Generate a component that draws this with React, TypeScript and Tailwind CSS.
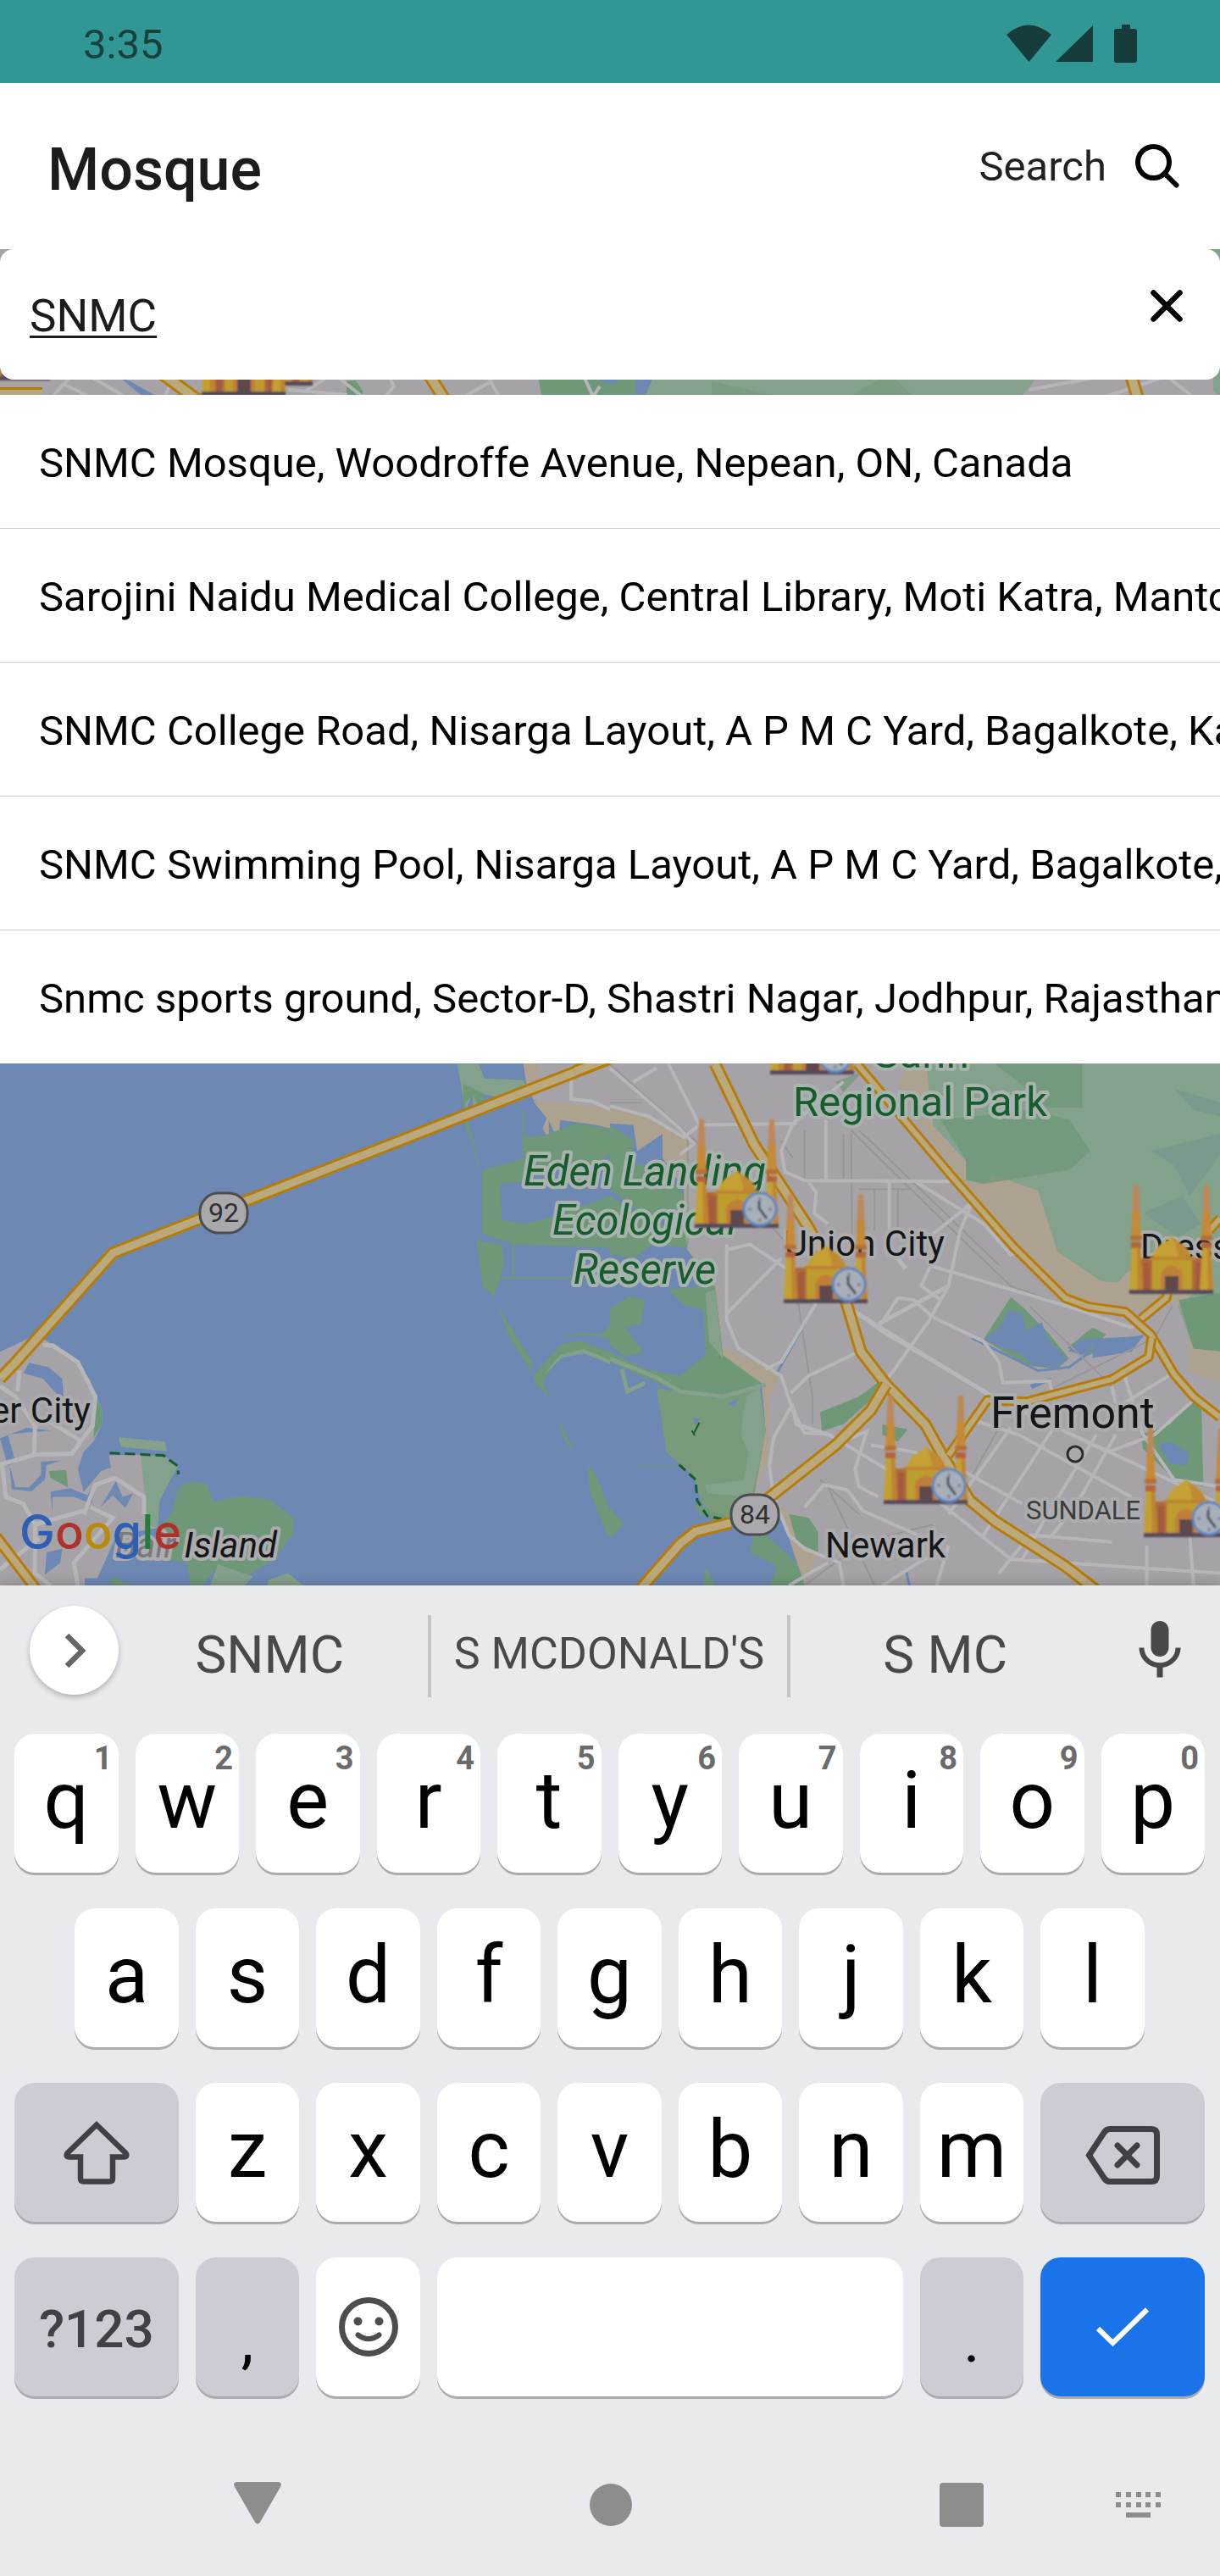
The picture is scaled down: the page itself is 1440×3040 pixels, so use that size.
import { useState } from "react";
import type { ReactNode } from "react";

const SUGGESTIONS = [
  "SNMC Mosque, Woodroffe Avenue, Nepean, ON, Canada",
  "Sarojini Naidu Medical College, Central Library, Moti Katra, Mantola, Agra",
  "SNMC College Road, Nisarga Layout, A P M C Yard, Bagalkote, Karnataka",
  "SNMC Swimming Pool, Nisarga Layout, A P M C Yard, Bagalkote, Karnataka",
  "Snmc sports ground, Sector-D, Shastri Nagar, Jodhpur, Rajasthan, India",
];

const WATER = "#6c88b3";
const LAND = "#a5a3a7";
const MARSH = "#6f9878";
const PARK = "#84a18b";
const SAND = "#ada28f";
const STREET = "#b6b6b9";
const RAIL = "#979599";
const CASING = "#b67c0a";
const HIGHWAY = "#b9a97d";

type MarkerProps = { x: number; y: number; clock?: boolean };

function MosqueMarker({ x, y, clock = false }: MarkerProps) {
  return (
    <g transform={`translate(${x} ${y})`} filter="url(#soft)">
      <rect x="13" y="87" width="15" height="38" fill="#b06a38" />
      <rect x="17" y="92" width="7" height="32" fill="#a35a3e" />
      <rect x="74" y="87" width="15" height="38" fill="#b06a38" />
      <rect x="78" y="92" width="7" height="32" fill="#a35a3e" />
      <path d="M27 88C28 78 35 70 44 66Q49 63 50 60Q51 63 57 67C66 72 72 78 73 88Z" fill="#c4a034" />
      <path d="M50 62Q55 67 58 88H73C72 78 66 72 57 67Z" fill="#c08a30" />
      <rect x="27" y="87" width="47" height="38" fill="#bd9c2f" />
      <rect x="24" y="85" width="53" height="4" fill="#bd8230" />
      <path d="M37 125V108Q38 98 50 95Q62 98 63 108V125Z" fill="#c07f38" />
      <rect x="42" y="108" width="16" height="18" fill="#5f4a4e" />
      {[8, 91].map((cx) => (
        <g key={cx} transform={`translate(${cx} 0)`}>
          <path d="M-3 2Q0-2 3 2L5 42H-5Z" fill="#bd8858" />
          <path d="M-4 32H4L6 66H-6Z" fill="#c48a34" />
          <rect x="-7" y="60" width="14" height="6" rx="2" fill="#b66e35" />
          <rect x="-6" y="68" width="12" height="7" fill="#b4643a" />
          <path d="M-5 75H5L8 125H-8Z" fill="#c2a030" />
          <path d="M1 75H5L8 125H2Z" fill="#bf8333" />
        </g>
      ))}
      <rect x="0" y="124" width="99" height="5" fill="#57495a" />
      {clock && (
        <g>
          <circle cx="77" cy="107" r="19" fill="#a9afb9" stroke="#5b86bd" strokeWidth="3" />
          <path d="M77 93v4M77 118v4M63 107h4M87 107h4" stroke="#7b8491" strokeWidth="3" />
          <path d="M76 97V106L85 118" fill="none" stroke="#4a5364" strokeWidth="3" />
        </g>
      )}
    </g>
  );
}

function Highway({ d, wide = 15 }: { d: string; wide?: number }) {
  return (
    <g fill="none" strokeLinejoin="round">
      <path d={d} stroke={CASING} strokeWidth={wide} vectorEffect="non-scaling-stroke" />
      <path d={d} stroke={HIGHWAY} strokeWidth={wide - 6} vectorEffect="non-scaling-stroke" />
    </g>
  );
}

function Streets({ d, width = 4, color = STREET }: { d: string; width?: number; color?: string }) {
  return <path d={d} fill="none" stroke={color} strokeWidth={width} vectorEffect="non-scaling-stroke" />;
}

function Shield({ x, y, label }: { x: number; y: number; label: string }) {
  return (
    <g>
      <rect x={x - 28} y={y - 23} width="56" height="47" rx="22" fill="#a9a9ab" stroke="#4b4c4e" strokeWidth="3" />
      <text x={x} y={y + 11} fontSize="32" textAnchor="middle" fill="#2f3032">
        {label}
      </text>
    </g>
  );
}

function WestBay() {
  return (
    <g transform="translate(0 1240) scale(.4592 .4082)">
      {/* Foster City and Bair Island */}
      <path d="M0 870L20 860L95 820L135 850L190 890L230 950L262 1040L262 1080L240 1130L215 1160L200 1210L215 1275L260 1215L285 1205L280 1170L360 1168L425 1175L458 1200L410 1290L405 1380L300 1400L250 1525L218 1525L218 1546H0Z" fill={LAND} />
      <path d="M230 960L262 1040L262 1080L240 1120L246 1020Z" fill={MARSH} />
      <path d="M75 902L125 915L160 948L164 1010L140 985L110 948L60 932Z" fill={WATER} />
      <path d="M0 1120L70 1090L130 1098L60 1104L20 1110L40 1190L20 1200Z" fill={WATER} />
      <path d="M105 1188L155 1185L120 1198L115 1240L80 1274L30 1268L25 1200L40 1262L75 1262L106 1225Z" fill={WATER} />
      <path d="M130 1275L180 1265L225 1285L250 1240L235 1310L190 1290L135 1290V1340Z" fill={WATER} />
      <path d="M125 1215L170 1212L175 1262L130 1235Z" fill={MARSH} />
      <path d="M258 1320L298 1245L315 1290L342 1280L322 1322L290 1285Z" fill={WATER} />
      <path d="M120 1450L160 1440L155 1480L115 1515Z" fill={WATER} />
      <path d="M305 1118L425 1130L428 1158L310 1145Z" fill={PARK} />
      <path d="M362 1170L420 1172L458 1200L410 1300L405 1380L380 1370Z" fill={PARK} />
      <path d="M440 1340L460 1260L490 1245L530 1252L550 1305L610 1288L690 1295L755 1350L752 1400L705 1470L640 1515L560 1490L520 1546H490L480 1480L420 1470L405 1380Z" fill={MARSH} />
      <path d="M560 1485L650 1520L630 1546H540ZM690 1530L740 1510L780 1546H688Z" fill={PARK} />
      <path d="M285 1520L340 1546H288Z" fill={MARSH} />
      <Streets d="M110 850L135 852L200 900L245 1000L238 1085L208 1128L185 1165L90 1168L5 1195L15 1290L60 1310L90 1370V1510L130 1546M0 970L40 1000L90 1085L88 1165M50 925L45 985M110 1060L208 1128M215 1340L245 1255L295 1235L370 1290V1340M232 1320L290 1350L190 1480L200 1546M90 1370L215 1330M0 1500L100 1410" width={5} />
      <path d="M282 1163L420 1170L458 1202V1225" fill="none" stroke="#165c2f" strokeWidth="3" strokeDasharray="12 6" vectorEffect="non-scaling-stroke" />

      {/* Eden Landing shore */}
      <path d="M1345 38H1568V225L1500 205L1440 195L1370 140Z" fill={LAND} />
      <path d="M1345 38H1385L1380 120L1355 110Z" fill={SAND} />
      <path d="M1370 145L1420 150L1568 165V220L1440 200L1435 262L1410 200L1412 262L1395 225L1405 195Z" fill={SAND} />
      <path d="M1175 38H1230L1245 80L1345 85L1360 120L1300 140L1240 125L1238 170L1215 170L1215 120L1195 180L1185 100Z" fill={PARK} />
      <path d="M1190 95L1245 125L1240 175L1215 130L1195 150L1210 260L1190 200Z" fill={MARSH} />
      <path d="M1240 345L1350 310L1345 250L1400 245L1480 210L1568 225V300L1500 350L1400 330L1345 380L1285 385L1290 490L1350 500L1420 480L1568 420V570L1320 560L1240 530Z" fill={MARSH} />
      <path d="M1225 548L1290 560L1295 620L1270 710L1240 680Z" fill={MARSH} />
      <Streets d="M1468 60V140L1520 145L1568 170" />
      <Streets d="M1195 180L1230 330M1345 180V310M1280 658H1568M1320 560V655M1285 750L1365 915" width={2} color={MARSH} />
      <path d="M1285 755L1320 810L1368 900V930L1310 830ZM1435 1065L1470 1145L1465 1150L1445 1110ZM1510 1200L1530 1220L1575 1350L1620 1460L1560 1400L1515 1270Z" fill={MARSH} />
      <path d="M1370 940L1440 850L1490 838L1568 870V895L1500 870L1440 880L1395 960L1415 1005L1375 960Z" fill={MARSH} />
      <path d="M1395 940L1440 880L1500 862L1568 895V905L1500 875L1445 888Z" fill={PARK} />
      <path d="M1430 830L1500 815L1568 822V830L1500 822ZM1545 825L1575 780V840Z" fill={MARSH} />

      <Highway d="M0 948L45 895L290 585L1568 22" wide={15} />
      <Highway d="M-10 1405L95 1560" wide={14} />
    </g>
  );
}

function EastBay() {
  return (
    <g transform="translate(720 1240) scale(.4592 .4082)">
      <path d="M0 0H1568V1546H0Z" fill={LAND} />
      {/* sand along the marsh and the foothills */}
      <path d="M0 165L110 190L200 260L195 560L275 680L290 860L440 930L410 1000L405 1180L370 1290L460 1330L500 1400L540 1440L500 1546H0Z" fill={SAND} />
      <path d="M760 38L820 55L830 215L915 330L985 360L1100 400L1150 580L1300 670L1420 600L1480 640L1568 720V960L1490 930L1480 760L1440 720L1370 750L1160 710L930 420L740 120Z" fill={SAND} />
      <path d="M800 38H1568V870L1500 860L1460 740L1500 700L1430 600L1330 640L1305 670L1260 665L1150 580L1100 405L985 358L960 385L915 375V320L830 215L815 60Z" fill={PARK} />
      <path d="M990 38H1213V165H1100L1060 100ZM850 200L1090 170L1180 200L1235 290L1180 345L960 385L915 370V315Z" fill={MARSH} opacity=".75" />
      <path d="M1450 110L1568 150V190L1500 170ZM1390 290L1568 240V300L1490 420L1450 330ZM1370 470L1470 420L1520 500L1460 540Z" fill="#7b998d" />
      <path d="M1462 720L1568 700V868L1500 862Z" fill={MARSH} />

      {/* salt ponds */}
      <path d="M0 210L60 215L70 290L135 240V310L190 400L190 560L270 690L290 880L390 965L400 1100L360 1290L440 1340L500 1546H0Z" fill={WATER} />
      <path d="M0 215L60 260L55 330L125 330L190 420L180 470L90 480L0 400Z" fill={MARSH} />
      <path d="M0 420L110 500L190 510L200 570L110 560L60 600L0 590Z" fill={MARSH} />
      <path d="M0 745L50 710L90 720L80 790L40 800L85 870L40 885L0 850ZM150 690L270 680L290 880L400 970L280 1000L170 985L0 900V870L90 920L180 940L245 880L240 750L190 735Z" fill={MARSH} />
      <path d="M245 700L270 690L290 890L255 840Z" fill={PARK} />
      <path d="M120 975L270 1005L385 975L400 1100L370 1290L430 1340L300 1350L240 1320L215 1230L145 1160Z" fill="#7a9a7c" />
      <path d="M350 1000L385 975L400 1100L365 1290L250 1280L245 1255L345 1240L355 1160L335 1110Z" fill={PARK} />
      <path d="M215 1310L310 1350L380 1380L480 1480L500 1546H410L430 1490L360 1450L370 1400L230 1340Z" fill={MARSH} />
      <path d="M0 1320L35 1370L0 1410ZM245 1490L270 1546H240Z" fill={MARSH} />
      <Streets d="M0 890L120 945L180 985L290 1000L400 965M30 920L45 985L90 960" width={5} color={PARK} />
      <Streets d="M75 1200H210M200 560V250" width={1} color={MARSH} />
      <path d="M302 1020L330 1005L318 1030ZM212 1060L230 1065L222 1085Z" fill={WATER} />
      <path d="M178 1197L220 1240L224 1300L250 1345L300 1357" fill="none" stroke="#165c2f" strokeWidth="3" strokeDasharray="10 6" vectorEffect="non-scaling-stroke" />
      <path d="M230 1075L216 1105M210 1098L218 1112" fill="none" stroke="#165c2f" strokeWidth="2" vectorEffect="non-scaling-stroke" />

      {/* city parks and lakes */}
      <path d="M540 1045L640 1000L700 950L690 990L600 1080L545 1100ZM700 1080L765 1095L740 1130L700 1110ZM460 1340L510 1350L535 1390V1450L480 1420ZM1365 1110L1440 1080L1495 1010L1520 1020L1525 1260L1450 1240L1370 1150Z" fill={MARSH} />
      <path d="M580 90L650 60L600 120Z" fill={MARSH} opacity=".7" />
      <path d="M960 835L1030 712L1065 745L1130 820L1180 890L1150 920L1070 910Z" fill={MARSH} />
      <path d="M962 835L1000 800L1025 750L1060 760L1070 810L1110 785L1125 830L1175 895L1145 915L1085 910L1060 880L1010 860Z" fill={WATER} />
      <path d="M1175 860L1240 800L1275 820L1250 850L1290 860L1230 880Z" fill={MARSH} />
      <path d="M1178 868L1210 835L1370 825L1340 870L1240 888L1245 848L1215 880ZM1080 965L1135 945L1130 955L1085 978ZM1410 1140L1440 1130L1490 1165L1480 1200L1440 1195Z" fill={WATER} />
      <Streets d="M930 830L1100 925L1180 915L1260 850L1370 825M430 930L500 790M770 1546L760 1500" width={3} color={WATER} />

      <Streets
        d="M0 40L220 260L480 590M620 230L900 540L1030 680L1180 740M500 230V380M600 240V370M640 230L1000 620M440 260L470 310M640 400H770M680 400V520M740 400V520M480 700L520 1000V1080M1080 740L1290 970M1130 980L1400 830L1445 740M540 1240L640 1340M500 1546L650 1420L830 1370M1000 1090L930 1230M560 1260L680 1546M0 150H80M620 240L622 560"
        width={2}
        color={RAIL}
      />
      <Streets
        d="M0 50L180 225L215 270L180 300M60 90L120 50M150 38L230 215L480 210M0 160L100 190L190 250L230 215M555 200V375M600 90L470 210L440 290L450 350L500 375L880 378M510 378L530 410L525 470L560 500M718 378V570M780 375L960 500L1030 590L1060 580M930 440L900 520L870 680L820 780L700 970M930 440L830 530M820 620L1180 740L1340 800L1370 770M860 530L800 680L850 720M300 560V780L330 860L440 940L470 1040L500 1105L560 1108L830 1290L1030 1470L1568 1510M300 760L440 600M300 575L360 560L440 620L640 760L980 1000L1568 1310M690 800L740 715L780 720L830 770L960 840L1000 900L1010 960L1130 955L1140 1010M545 700L440 900L400 920M640 870L510 940L465 990M470 1020L420 1120L410 1200L420 1290L460 1400L500 1440L590 1480L600 1546M500 1320L550 1255L610 1270L650 1330L790 1400M600 1130L660 1100L630 1210L640 1260L690 1290M670 1140L780 1160L900 1210L1060 1310M940 1070L1050 1110L1340 1290M1000 1010L1280 1160L1400 1110L1500 1010M870 1340L960 1200L1030 1090M960 1400L1140 1090M1060 1470L1120 1350L1250 1110M1000 1510L1080 1400L1290 1420M1130 1410L1200 1310L1300 1110M1380 1430V1546M1490 1400L1500 1546M1290 970L1300 1020M1320 930L1370 1110L1450 1240L1568 1260M460 1546L560 1480M1450 930L1320 1020M700 1546L850 1440M840 1546L870 1430"
      />
      <Streets d="M690 790L870 680M720 570L760 630M600 730L700 810L1000 1010M470 1030L480 1080L560 1110" width={5} />

      <Highway d="M-90 60L20 12" wide={15} />
      <Highway d="M270 38L370 270L510 510L600 700L645 870L710 965L810 1080L860 1180L925 1300L990 1360L1170 1490L1250 1560" wide={15} />
      <Highway d="M635 38L880 365L1040 570L1170 715L1230 740L1325 755L1390 820L1450 935L1500 1000L1568 1060" wide={12} />
      <Highway d="M710 965L670 1040L580 1140L400 1300M310 1365L220 1390L180 1425L75 1560" wide={15} />
      <Highway d="M870 1170L970 1010L1070 1015L1290 950L1385 885L1392 830M1365 775L1430 715L1435 690M1540 520L1568 485" wide={12} />
    </g>
  );
}

// Sliver of map between the search field and the result list.
function NorthBay() {
  return (
    <g>
      <rect x="0" y="294" width="1440" height="200" fill={LAND} />
      <path d="M634 440H770L760 480H642Z" fill={MARSH} />
      <path d="M765 440H1228L1196 480H755Z" fill={PARK} />
      <path d="M840 450L910 466H840ZM1050 440L1080 470H1000Z" fill="#7c9c82" />
      <path d="M700 446H735L722 454ZM750 446H771L762 466H750Z" fill={WATER} />
      <path d="M1425 294H1440V470L1432 460V400Z" fill={PARK} />
      <path d="M409 450L420 449L428 461V466H409Z" fill={MARSH} />
      <path d="M142 446L152 449L182 466H166Z" fill={WATER} />
      <Streets d="M60 470L82 446M76 454L110 470M110 446L150 470M340 460L410 466M360 462L385 446M400 446L430 470M455 468L465 456L460 446M590 470L577 446M545 470L580 450M690 446L700 468L708 456M1215 460L1290 446M1370 446L1300 470M1380 446L1410 470M195 468L200 455" />
      <Highway d="M0 464H50" wide={14} />
      <Highway d="M190 440L236 474M505 440L530 480M1334 440L1346 480" wide={16} />
    </g>
  );
}

function MapBackdrop() {
  const park = { fill: "#165c2f", stroke: "#a9b3ae" };
  const town = { fill: "#151617", stroke: "#acacae" };
  return (
    <svg
      viewBox="0 294 1440 1577"
      preserveAspectRatio="xMidYMin slice"
      className="absolute inset-0 h-full w-full font-['Roboto',sans-serif]"
      role="img"
      aria-label="Map"
    >
      <defs>
        <filter id="soft" x="-10%" y="-10%" width="120%" height="120%">
          <feGaussianBlur stdDeviation="1" />
        </filter>
      </defs>
      <rect x="0" y="294" width="1440" height="1577" fill={WATER} />
      <WestBay />
      <EastBay />
      <NorthBay />
      <Shield x={264} y={1431} label="92" />
      <Shield x={891} y={1787} label="84" />

      <g strokeWidth="8" strokeLinejoin="round" paintOrder="stroke">
        <g {...park} fontSize="49" fontStyle="italic" textAnchor="middle">
          <text x="761" y="1399">Eden Landing</text>
          <text x="761" y="1457">Ecological</text>
          <text x="761" y="1515">Reserve</text>
        </g>
        <g {...park} fontSize="49" textAnchor="middle">
          <text x="1086" y="1260">Garin</text>
          <text x="1086" y="1317">Regional Park</text>
        </g>
        <g {...town} fontSize="42">
          <text x="107" y="1679" textAnchor="end">Foster City</text>
          <text x="1115" y="1482" textAnchor="end">Union City</text>
          <text x="1346" y="1486">Dresser</text>
          <text x="974" y="1838">Newark</text>
          <text x="327" y="1838" textAnchor="end" fontStyle="italic">
            <tspan fill="#77797c">Bair</tspan> Island
          </text>
          <text x="1169" y="1685" fontSize="52">Fremont</text>
          <text x="1211" y="1793" fontSize="31" fill="#3b3c3e">SUNDALE</text>
        </g>
      </g>
      <circle cx="1269" cy="1716" r="9" fill="#a9a9ab" stroke="#2b2c2e" strokeWidth="3" />

      <MosqueMarker x={-40} y={320} />
      <MosqueMarker x={270} y={326} />
      <MosqueMarker x={238} y={338} />
      <MosqueMarker x={909} y={1139} clock />
      <MosqueMarker x={820} y={1320} clock />
      <MosqueMarker x={925} y={1409} clock />
      <MosqueMarker x={1333} y={1398} />
      <MosqueMarker x={1043} y={1646} clock />
      <MosqueMarker x={1350} y={1685} clock />

      <text x="23" y="1828" fontSize="56" fontWeight="500" className="font-['Inter',sans-serif]">
        <tspan fill="#2f5fb4">G</tspan>
        <tspan fill="#ae3229">o</tspan>
        <tspan fill="#b98b08">o</tspan>
        <tspan fill="#2f5fb4">g</tspan>
        <tspan fill="#267c3c">l</tspan>
        <tspan fill="#ae3229">e</tspan>
      </text>
    </svg>
  );
}

function StatusBar() {
  return (
    <div className="flex items-center justify-between bg-[#319795] pt-7 pr-[98px] pb-5 pl-[98px] text-[49px] leading-[50px] text-[#18403f]">
      <time>3:35</time>
      <svg width="154" height="45" viewBox="0 0 154 45" fill="#163c3c" className="mb-1 shrink-0" aria-hidden="true">
        <path d="M0 12Q26-11 53 12L26.500 44Z" />
        <path d="M102 1V44H58Z" />
        <path d="M136 0H146V5H151Q154 5 154 8V42Q154 45 151 45H130Q127 45 127 42V8Q127 5 130 5H136Z" />
      </svg>
    </div>
  );
}

type KeyProps = {
  children?: ReactNode;
  label?: string;
  hint?: string;
  className?: string;
  onPress?: () => void;
};

function Key({ children, label, hint, className = "col-span-2 bg-white pb-[6px] text-[94px]", onPress }: KeyProps) {
  return (
    <button
      type="button"
      aria-label={label}
      onClick={onPress}
      className={`relative mx-[10px] flex h-[164px] items-center justify-center rounded-3xl leading-none shadow-[0_3px_0_#a9abae] ${className}`}
    >
      {children}
      {hint && (
        <span className="absolute top-[10px] right-[7px] text-[38px] leading-[38px] font-bold text-[#6b6b6b]">
          {hint}
        </span>
      )}
    </button>
  );
}

function Keyboard({ onType, onDelete }: { onType: (text: string) => void; onDelete: () => void }) {
  return (
    <section aria-label="Keyboard" className="relative bg-[#e8eaed] shadow-[0_-2px_12px_rgba(0,0,0,0.2)]">
      <div className="flex h-[153px] items-center pl-[35px]">
        <button
          type="button"
          aria-label="More"
          className="flex h-[105px] w-[105px] shrink-0 items-center justify-center rounded-full bg-white pl-1 shadow-[0_3px_6px_rgba(0,0,0,0.25)]"
        >
          <svg width="27" height="42" viewBox="0 0 27 42" fill="none" stroke="#666" strokeWidth="6.500" aria-hidden="true">
            <path d="M3 3L21 21L3 39" />
          </svg>
        </button>
        <div className="grid h-[84px] flex-1 grid-cols-[364fr_4px_420fr_4px_364fr] items-center text-[62px] whitespace-nowrap text-[#48494b]">
          <button type="button" className="pr-2 pb-1">SNMC</button>
          <span className="h-full bg-[#c3c4c8]" />
          <button type="button" className="pb-1 text-[52px]">S MCDONALD'S</button>
          <span className="h-full bg-[#c3c4c8]" />
          <button type="button" className="pb-1">S MC</button>
        </div>
        <button type="button" aria-label="Voice input" className="flex w-[142px] shrink-0 justify-center">
          <svg width="84" height="84" viewBox="0 0 24 24" fill="#48494b" aria-hidden="true">
            <path d="M12 14c1.660 0 2.990-1.340 2.990-3L15 5c0-1.660-1.340-3-3-3S9 3.340 9 5v6c0 1.660 1.340 3 3 3zm5.300-3c0 3-2.540 5.100-5.300 5.100S6.700 14 6.700 11H5c0 3.410 2.720 6.230 6 6.720V21h2v-3.280c3.280-.48 6-3.300 6-6.720h-1.700z" />
          </svg>
        </button>
      </div>

      <div className="flex flex-col gap-[42px] pt-[22px] pr-2 pl-[7px]">
        <div className="grid grid-cols-20">
          {"qwertyuiop".split("").map((char, i) => (
            <Key key={char} hint={String((i + 1) % 10)} onPress={() => onType(char)}>
              {char}
            </Key>
          ))}
        </div>
        <div className="grid grid-cols-20">
          {"asdfghjkl".split("").map((char, i) => (
            <Key
              key={char}
              className={
                i === 0
                  ? "col-span-2 col-start-2 bg-white pb-[6px] text-[94px]"
                  : "col-span-2 bg-white pb-[6px] text-[94px]"
              }
              onPress={() => onType(char)}
            >
              {char}
            </Key>
          ))}
        </div>
        <div className="grid grid-cols-20">
          <Key label="Shift" className="col-span-3 bg-[#cbcdd5]">
            <svg width="78" height="75" viewBox="0 0 78 75" fill="none" stroke="#404144" strokeWidth="6.500" aria-hidden="true">
              <path d="M39 4.500L73.500 38Q76 42.500 71 42.500H58V68Q58 71.500 54 71.500H24Q20 71.500 20 68V42.500H7Q2 42.500 4.500 38Z" />
            </svg>
          </Key>
          {"zxcvbnm".split("").map((char) => (
            <Key key={char} onPress={() => onType(char)}>
              {char}
            </Key>
          ))}
          <Key label="Delete" className="col-span-3 bg-[#cbcdd5] pt-[6px]" onPress={onDelete}>
            <svg width="88" height="69" viewBox="0 0 88 69" fill="none" stroke="#404144" strokeWidth="7" aria-hidden="true">
              <path d="M4.500 34.500L22 8Q24.500 3.500 29 3.500H78Q84.500 3.500 84.500 10V59Q84.500 65.500 78 65.500H29Q24.500 65.500 22 61Z" />
              <path d="M38 23L61 46M61 23L38 46" strokeLinecap="round" />
            </svg>
          </Key>
        </div>
        <div className="grid grid-cols-20">
          <Key className="col-span-3 bg-[#cbcdd5] pt-[6px] text-[62px] font-medium text-[#404144]">?123</Key>
          <Key className="col-span-2 bg-[#cbcdd5] pt-[30px] text-[75px]" onPress={() => onType(",")}>
            ,
          </Key>
          <Key label="Emoji" className="col-span-2 bg-white">
            <svg width="70" height="70" viewBox="0 0 70 70" fill="none" stroke="#4d4d4d" strokeWidth="7" aria-hidden="true">
              <circle cx="35" cy="35" r="31.500" />
              <path d="M22.500 44.500Q35 54 47.500 44.500" strokeWidth="6" strokeLinecap="round" />
              <circle cx="22.500" cy="28.500" r="5" fill="#4d4d4d" stroke="none" />
              <circle cx="47.500" cy="28.500" r="5" fill="#4d4d4d" stroke="none" />
            </svg>
          </Key>
          <Key label="Space" className="col-span-8 bg-white" onPress={() => onType(" ")} />
          <Key className="col-span-2 bg-[#cbcdd5] pt-[30px] text-[75px]" onPress={() => onType(".")}>
            .
          </Key>
          <Key label="Done" className="col-span-3 bg-[#1a73e8]">
            <svg width="62" height="47" viewBox="0 0 62 47" fill="none" stroke="#fff" strokeWidth="6" aria-hidden="true">
              <path d="M2 25L19.500 42L60 2.500" />
            </svg>
          </Key>
        </div>
      </div>

      <nav className="flex h-[212px] items-center pt-11 pr-[70px] pl-[276px]">
        <div className="flex flex-1 items-center justify-between">
          <button type="button" aria-label="Back">
            <svg width="56" height="50" viewBox="0 0 56 50" fill="#8c8e8d" className="mb-1" aria-hidden="true">
              <path d="M4 0H52Q57 0 55.500 5L31 47.500Q28 51.500 25 47.500L.5 5Q-1 0 4 0Z" />
            </svg>
          </button>
          <button type="button" aria-label="Home" className="h-[50px] w-[50px] rounded-full bg-[#8c8e8d]" />
          <button type="button" aria-label="Recent apps" className="h-[52px] w-[52px] rounded bg-[#8c8e8d]" />
        </div>
        <button type="button" aria-label="Switch keyboard" className="ml-[156px]">
          <svg width="53" height="30" viewBox="0 0 53 30" fill="#8c8e8d" aria-hidden="true">
            {[0, 12, 24, 35, 47].map((x) => (
              <path key={x} d={`M${x} 0h6v6h-6zM${x} 12h6v6h-6z`} />
            ))}
            <rect x="12" y="24" width="29" height="6" />
          </svg>
        </button>
      </nav>
    </section>
  );
}

export default function App() {
  const [query, setQuery] = useState("SNMC");

  return (
    <div className="flex min-h-screen flex-col overflow-hidden bg-white font-['Roboto',sans-serif] text-black">
      <StatusBar />

      <header className="flex items-center justify-between py-14 pr-12 pl-14">
        <h1 className="pt-2 text-[70px] leading-[76px] font-medium text-[#1c1c1e]">Mosque</h1>
        <button type="button" className="flex items-center gap-[34px] text-[49px] leading-[56px] text-[#222]">
          <span className="pt-0.5">Search</span>
          <svg width="52" height="52" viewBox="0 0 52 52" fill="none" stroke="#000" strokeWidth="6" strokeLinecap="round" aria-hidden="true">
            <circle cx="21.500" cy="21.500" r="18.500" />
            <path d="M35 35L48.500 48.500" />
          </svg>
        </button>
      </header>

      <main className="relative flex-1">
        <MapBackdrop />
        <div className="relative">
          <div className="flex items-center justify-between rounded-2xl bg-white py-9 pr-[44px] pl-[35px]">
            <input
              type="text"
              aria-label="Search for a mosque"
              value={query}
              onChange={(e) => setQuery(e.target.value)}
              className="h-[82px] min-w-0 flex-1 pt-1 text-[53px] text-[#1c1c1e] underline decoration-[3px] underline-offset-[5px] outline-none"
            />
            <button type="button" aria-label="Clear" onClick={() => setQuery("")} className="mb-5">
              <svg width="38" height="38" viewBox="0 0 38 38" fill="none" stroke="#000" strokeWidth="6.500" strokeLinecap="round" aria-hidden="true">
                <path d="M3.500 3.500L34.500 34.500M34.500 3.500L3.500 34.500" />
              </svg>
            </button>
          </div>

          <ul className="mt-[18px] divide-y divide-[#c8c8c8] bg-white">
            {SUGGESTIONS.map((place) => (
              <li key={place}>
                <button
                  type="button"
                  className="block w-full overflow-hidden pt-14 pb-[52px] pl-[46px] text-left text-[49px] leading-[49px] whitespace-nowrap"
                >
                  {place}
                </button>
              </li>
            ))}
          </ul>
        </div>
      </main>

      <Keyboard
        onType={(text) => setQuery((current) => current + text)}
        onDelete={() => setQuery((current) => current.slice(0, -1))}
      />
    </div>
  );
}
